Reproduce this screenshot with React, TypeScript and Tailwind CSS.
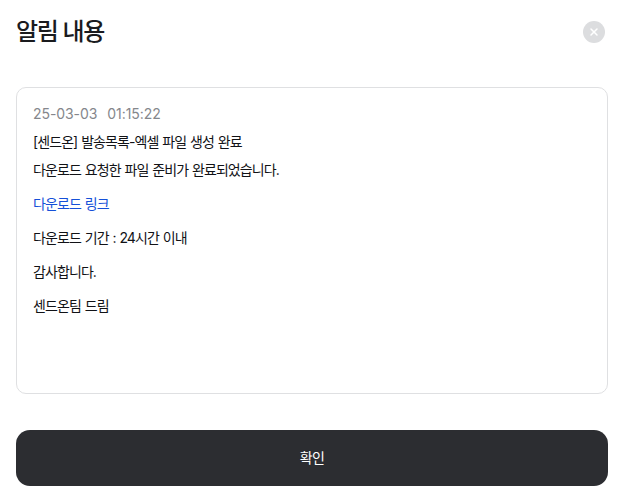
import { X } from 'lucide-react'

const fontStack = "font-['Inter','Noto_Sans_CJK_KR',sans-serif]"

export default function App() {
  return (
    <div className={`w-[625px] h-[504px] bg-white px-4 pt-4 flex flex-col ${fontStack}`}>
      {/* Header */}
      <div className="flex items-center justify-between h-[32px]">
        <h1 className="text-[24px] leading-[32px] font-medium tracking-[-0.055em] text-[#1a1b1e]">알림 내용</h1>
        <button className="mr-[4px] w-[22px] h-[22px] rounded-full bg-[#dcdddf] flex items-center justify-center">
          <X className="w-[12px] h-[12px] text-white" strokeWidth={3} />
        </button>
      </div>

      {/* Message */}
      <div className="mt-[39px] w-[592px] h-[307px] border border-[#dfe0e2] rounded-[10px] px-4 pt-[16px]">
        <div className="flex gap-[10px] text-[14px] leading-[20px] tracking-[-0.005em] text-[#85878c]">
          <span>25-03-03</span>
          <span>01:15:22</span>
        </div>
        <div className="text-[14px] leading-[20px] tracking-[-0.065em] [word-spacing:0.8px] text-[#111216]">
          <p className="mt-[8px]">[센드온] 발송목록-엑셀 파일 생성 완료</p>
          <p className="mt-[8px]">다운로드 요청한 파일 준비가 완료되었습니다.</p>
          <p className="mt-[14px] text-[#1550d8]">다운로드 링크</p>
          <p className="mt-[14px]">다운로드 기간 : 24시간 이내</p>
          <p className="mt-[14px]">감사합니다.</p>
          <p className="mt-[14px]">센드온팀 드림</p>
        </div>
      </div>

      {/* Confirm */}
      <button className="mt-[36px] w-[592px] h-[56px] pb-[2px] rounded-[14px] bg-[#2c2d31] text-white text-[14px] tracking-[-0.05em]">
        확인
      </button>
    </div>
  )
}
